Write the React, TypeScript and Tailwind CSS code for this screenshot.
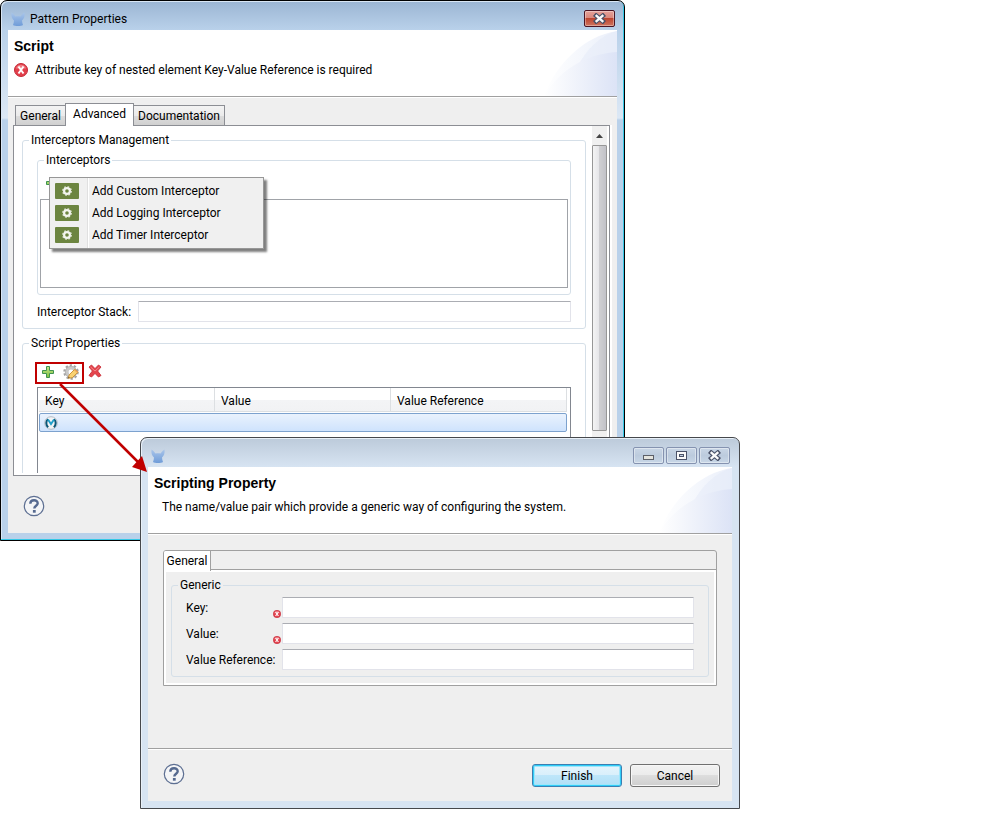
import type { ReactNode } from "react";

function AppIcon() {
  return (
    <svg className="size-4 shrink-0" viewBox="0 0 16 16" aria-hidden="true">
      <defs>
        <linearGradient id="appIcon" x1="0" y1="0" x2="0" y2="1">
          <stop offset="0" stopColor="#a9c5ea" />
          <stop offset="1" stopColor="#6f9cd8" />
        </linearGradient>
      </defs>
      <path
        d="M1.500 1.500C3 2.500 4.500 4 5.500 5.500C7 5 9 5 10.500 5.500C11.500 4 13 2.500 14.500 1.500C15 5 14 8 12 9.500C12 11 12.500 12.500 13 14C11 15.300 5 15.300 3 14C3.500 12.500 4 11 4 9.500C2 8 1 5 1.500 1.500Z"
        fill="url(#appIcon)"
      />
    </svg>
  );
}

function ErrorIcon({ className }: { className: string }) {
  return (
    <svg className={className} viewBox="0 0 14 14" aria-hidden="true">
      <circle cx="7" cy="7" r="6.500" fill="#e23f4b" stroke="#c42b38" />
      <path d="M2 5.500a5.200 5.200 0 0 1 10 0z" fill="#ef7b82" />
      <path d="M4.500 3.500 9.500 10.500M9.500 3.500 4.500 10.500" stroke="#fff" strokeWidth="2" />
    </svg>
  );
}

function PlusIcon() {
  return (
    <svg className="size-[14px]" viewBox="0 0 14 14" aria-hidden="true">
      <defs>
        <linearGradient id="plus" x1="0" y1="0" x2="0" y2="1">
          <stop offset="0" stopColor="#c5e58c" />
          <stop offset="1" stopColor="#7fc03f" />
        </linearGradient>
      </defs>
      <path
        d="M5.500 1.500h3v4h4v3h-4v4h-3v-4h-4v-3h4z"
        fill="url(#plus)"
        stroke="#3f9350"
      />
    </svg>
  );
}

function EditIcon() {
  return (
    <svg className="size-4" viewBox="0 0 16 16" aria-hidden="true">
      <circle cx="8" cy="8" r="6.500" fill="none" stroke="#a3a3a3" strokeWidth="2.500" strokeDasharray="2.200 1.880" />
      <circle cx="8" cy="8" r="4.200" fill="none" stroke="#c9c9c9" strokeWidth="3.500" />
      <circle cx="8" cy="8" r="5.700" fill="none" stroke="#a3a3a3" strokeWidth="0.600" />
      <path d="M5.200 14.200 6.200 10.800 11.800 5.200 15.200 8 9.200 13.800Z" fill="#f9d272" stroke="#c98c2e" strokeWidth="0.900" />
      <path d="M11 6 12 5.200 15.200 8 14.200 9Z" fill="#eda25a" />
      <path d="M5.200 14.200 5.700 12.700 6.800 13.700Z" fill="#5b4630" />
    </svg>
  );
}

function DeleteIcon() {
  return (
    <svg className="size-[14px]" viewBox="0 0 14 14" aria-hidden="true">
      <path
        d="M1 3 3.500 1 7 4.600 10.500 1 13 3 9.600 7 13 11.500 10.500 13 7 9.400 3.500 13 1 11.500 4.400 7Z"
        fill="#e5444c"
        stroke="#c9303a"
        strokeWidth="0.900"
        strokeLinejoin="round"
      />
      <path d="M2.600 3 7 7M11.400 3 7 7" stroke="#f28a8d" strokeWidth="1" />
    </svg>
  );
}

function MuleIcon() {
  return (
    <svg className="size-[14px]" viewBox="0 0 14 14" aria-hidden="true">
      <circle cx="7" cy="7" r="6.300" fill="#f2f4f6" stroke="#b4bcc6" />
      <path d="M4.200 11.200C1.600 9 1.800 4.800 4 3.200M9.800 11.200C12.400 9 12.200 4.800 10 3.200" fill="none" stroke="#0b5677" strokeWidth="2" />
      <path d="M4 3.500 7 8 10 3.500" fill="none" stroke="#1f9fc9" strokeWidth="1.900" />
    </svg>
  );
}

function InterceptorIcon() {
  return (
    <svg className="h-4 w-6 shrink-0" viewBox="0 0 24 16" aria-hidden="true">
      <rect width="24" height="16" rx="1" fill="#6c8540" />
      <circle cx="12" cy="8" r="4.300" fill="none" stroke="#d5dcc8" strokeWidth="1.400" strokeDasharray="1.700 1.677" />
      <circle cx="12" cy="8" r="2.900" fill="none" stroke="#f3f5ef" strokeWidth="2.200" />
    </svg>
  );
}

function HelpButton() {
  return (
    <button type="button" aria-label="Help" className="size-[22px]">
      <svg viewBox="0 0 22 22" className="size-full" aria-hidden="true">
        <circle cx="11" cy="11" r="9.700" fill="#f4f5f7" stroke="#5d6f92" strokeWidth="1.200" />
        <path d="M7.300 8.800C7.300 4.200 14.700 4.200 14.700 8.300C14.700 10.800 11.300 10.800 11.300 13.600" fill="none" stroke="#566a90" strokeWidth="2.400" />
        <rect x="9.900" y="15" width="2.800" height="2.700" fill="#566a90" />
      </svg>
    </button>
  );
}

function HeaderArt() {
  return (
    <svg className="h-full w-[75px] shrink-0" viewBox="0 0 75 66" preserveAspectRatio="none" aria-hidden="true">
      <defs>
        <linearGradient id="sweepA">
          <stop offset="0" stopColor="#fff" />
          <stop offset="0.400" stopColor="#f7f9fd" />
          <stop offset="1" stopColor="#eaeffa" />
        </linearGradient>
        <linearGradient id="sweepB">
          <stop offset="0" stopColor="#fff" />
          <stop offset="0.300" stopColor="#f5f7fc" />
          <stop offset="1" stopColor="#dce3f6" />
        </linearGradient>
      </defs>
      <path d="M2 66C14 34 42 6 75 1V66Z" fill="url(#sweepA)" />
      <path d="M35 38C45 18 58 6 75 1V23C60 25 46 30 35 38Z" fill="#e3e9f8" opacity="0.500" />
      <path d="M2 66C16 42 42 24 75 22V66Z" fill="url(#sweepB)" />
    </svg>
  );
}

function DialogHeader({ title, children }: { title: string; children: ReactNode }) {
  return (
    <header className="flex h-[67px] justify-between border-b border-[#a0a0a0] bg-white">
      <div className="flex flex-col gap-2 pt-2 pl-[6px]">
        <h1 className="font-['Liberation_Sans',Arial,sans-serif] text-sm leading-4 font-bold">{title}</h1>
        {children}
      </div>
      <HeaderArt />
    </header>
  );
}

function CrossGlyph() {
  return (
    <svg className="h-[11px] w-[13px] shrink-0" viewBox="0 0 13 11" aria-hidden="true">
      <path d="M1.500 1.200 11.500 9.800M11.500 1.200 1.500 9.800" stroke="#4b5268" strokeWidth="4.600" />
      <path d="M2.700 2.200 10.300 8.800M10.300 2.200 2.700 8.800" stroke="#fafafa" strokeWidth="2.400" />
    </svg>
  );
}

function Group({ label, className, children }: { label: string; className: string; children: ReactNode }) {
  return (
    <fieldset className="min-w-0 rounded-[3px] border border-[#d5dfe8]">
      <legend className="ml-[6px] px-[2px] leading-4">{label}</legend>
      <div className={className}>{children}</div>
    </fieldset>
  );
}

const textBox =
  "h-[21px] min-w-0 flex-1 rounded-[1px] border border-[#e2e3ea] border-t-[#abadb3] bg-white px-1 outline-none";

function PropertyRow({ id, label, invalid }: { id: string; label: string; invalid: boolean }) {
  return (
    <div className="flex items-center">
      <label htmlFor={id} className="w-[87px] whitespace-nowrap">
        {label}
      </label>
      <span className="flex h-[21px] w-[9px] items-end">
        {invalid && <ErrorIcon className="size-2 shrink-0" />}
      </span>
      <input id={id} type="text" className={textBox} />
    </div>
  );
}

const interceptors = ["Add Custom Interceptor", "Add Logging Interceptor", "Add Timer Interceptor"];

function InterceptorMenu() {
  return (
    <div
      role="menu"
      className="absolute top-[29px] left-3 z-10 w-[215px] border border-[#979797] bg-[linear-gradient(90deg,#f0f0f0_37px,#e0e0e0_37px,#e0e0e0_38px,#fff_38px,#fff_39px,#f0f0f0_39px)] p-[2px] shadow-[3px_3px_2px_rgba(0,0,0,0.5)]"
    >
      {interceptors.map((name) => (
        <button key={name} type="button" role="menuitem" className="flex h-[22px] w-full items-center gap-[13px] pl-[3px]">
          <InterceptorIcon />
          {name}
        </button>
      ))}
    </div>
  );
}

function ScrollBar() {
  return (
    <div className="flex w-[15px] shrink-0 flex-col items-center bg-[#f0f0f0]">
      <button type="button" aria-label="Scroll up" className="flex h-[19px] w-full items-center justify-center">
        <svg className="h-1 w-[7px]" viewBox="0 0 7 4" aria-hidden="true">
          <path d="M0 4 3.500 0 7 4Z" fill="#444" />
        </svg>
      </button>
      <div className="h-[286px] w-full rounded-[1px] border border-[#979797] bg-[linear-gradient(90deg,#f4f4f4,#e6e6e9_45%,#cfcfd2_50%,#c2c2c8)]" />
    </div>
  );
}

function PatternDialog() {
  return (
    <section className="w-[625px] rounded-t-[7px] border border-black bg-[linear-gradient(#9bb5d3,#b9d1ea_29px,#dce8f5_117px,#b9d1ea_119px)] px-[7px] pb-[7px] shadow-[inset_-1px_-1px_0_#35c8e6,inset_1px_1px_0_#d9e6f4]">
      <div className="flex h-[29px] items-center pt-[6px]">
        <span className="flex flex-1 items-center gap-1 pl-[2px]">
          <AppIcon />
          Pattern Properties
        </span>
        <button
          type="button"
          aria-label="Close"
          className="mr-[2px] flex h-[17px] w-[31px] items-center justify-center rounded-[2px] border border-[#4a1524] bg-[linear-gradient(#e5a199,#d9877c_47%,#bd4530_50%,#cf7560)] shadow-[inset_0_0_0_1px_rgba(255,255,255,0.35)]"
        >
          <CrossGlyph />
        </button>
      </div>
      <div className="bg-[#efefef]">
        <DialogHeader title="Script">
          <p className="flex items-center gap-[7px] whitespace-nowrap">
            <ErrorIcon className="size-[14px]" />
            Attribute key of nested element Key-Value Reference is required
          </p>
        </DialogHeader>
        <div className="border-t border-white px-[5px] pt-[5px]">
          <div role="tablist" className="flex items-end pl-[2px]">
            <button type="button" role="tab" className="h-5 w-[50px] border border-r-0 border-b-0 border-[#8c8e94] bg-[linear-gradient(#f3f3f3,#ebebeb_50%,#dddddd_50%,#d0d0d0)]">
              General
            </button>
            <button type="button" role="tab" aria-selected="true" className="relative z-10 -mb-px h-[23px] w-[69px] border border-b-0 border-[#8c8e94] bg-white pb-[2px]">
              Advanced
            </button>
            <button type="button" role="tab" className="h-5 w-[91px] border border-b-0 border-l-0 border-[#8c8e94] bg-[linear-gradient(#f3f3f3,#ebebeb_50%,#dddddd_50%,#d0d0d0)]">
              Documentation
            </button>
          </div>
          <div className="mr-[2px] flex h-[351px] overflow-hidden border border-[#8c8e94] bg-white pr-[2px] pb-[2px] shadow-[2px_0_0_#fff]">
            <div className="flex-1 overflow-hidden pt-[6px] pr-[6px] pl-2">
              <Group label="Interceptors Management" className="px-[14px] pb-[6px]">
                <div className="relative pt-1">
                  <Group label="Interceptors" className="px-[2px] pb-[6px]">
                    <div className="flex h-[31px] items-start gap-2 pt-2 pl-[5px]">
                      <PlusIcon />
                    </div>
                    <div role="listbox" aria-label="Interceptors" className="h-[89px] border border-[#a0a3a8]" />
                  </Group>
                  <InterceptorMenu />
                </div>
                <div className="mt-[6px] flex items-center">
                  <label htmlFor="stack" className="w-[101px] whitespace-nowrap">
                    Interceptor Stack:
                  </label>
                  <input id="stack" type="text" className={textBox} />
                </div>
              </Group>
              <div className="h-[6px]" />
              <Group label="Script Properties" className="px-[14px] pb-4">
                <div className="-ml-[2px] flex h-[36px] items-center gap-1 pt-[7px] pb-[7px]">
                  <div className="mt-[8px] flex h-[22px] w-[49px] shrink-0 items-center justify-center gap-2 border-2 border-[#c00000] pb-[2px]">
                    <button type="button" aria-label="Add property"><PlusIcon /></button>
                    <button type="button" aria-label="Edit property"><EditIcon /></button>
                  </div>
                  <button type="button" aria-label="Delete property" className="mt-1"><DeleteIcon /></button>
                </div>
                <div className="h-[130px] border border-[#828790] pr-[3px] pl-px">
                  <table className="w-full table-fixed border-separate border-spacing-0 text-left">
                    <thead>
                      <tr className="h-6 bg-[linear-gradient(#fff_50%,#f3f4f6_50%,#f1f2f4)]">
                        {["Key", "Value", "Value Reference"].map((name) => (
                          <th key={name} scope="col" className="border-r border-b border-[#dcdfe2] pt-[2px] pl-[6px] font-normal">
                            {name}
                          </th>
                        ))}
                      </tr>
                    </thead>
                    <tbody>
                      <tr>
                        <td colSpan={3} className="pt-px">
                          <div className="flex h-[19px] items-center rounded-[2px] border border-[#7da2ce] bg-[linear-gradient(#e9f2fd,#cfe3fd)] pl-1">
                            <MuleIcon />
                          </div>
                        </td>
                      </tr>
                    </tbody>
                  </table>
                </div>
              </Group>
            </div>
            <ScrollBar />
          </div>
        </div>
        <footer className="flex h-[57px] items-center pb-px pl-[15px] pt-1">
          <HelpButton />
        </footer>
      </div>
    </section>
  );
}

const captionButton =
  "flex h-[17px] w-[31px] items-center justify-center rounded-[2px] border border-[#8593b0] bg-[linear-gradient(#c9d6e6,#bccbdd_50%,#c8d7e7)] shadow-[inset_0_0_0_1px_rgba(255,255,255,0.4)]";

function ScriptingDialog() {
  return (
    <section className="absolute top-[437px] left-[140px] z-20 w-[600px] rounded-t-[7px] border border-[#46484c] bg-[linear-gradient(#bccada,#d7e4f2_29px)] px-[7px] pb-[7px] shadow-[inset_1px_1px_0_#e8f0f8]">
      <div className="flex h-[29px] items-center pt-[6px]">
        <span className="flex-1 pl-[2px]">
          <AppIcon />
        </span>
        <span className="mr-[2px] flex gap-[2px]">
          <button type="button" aria-label="Minimize" className={captionButton}>
            <svg className="mt-[3px] h-[5px] w-[11px]" viewBox="0 0 11 5" aria-hidden="true">
              <rect x="0.500" y="0.500" width="10" height="4" fill="#e4e4de" stroke="#5c5f68" />
            </svg>
          </button>
          <button type="button" aria-label="Maximize" className={captionButton}>
            <svg className="h-[9px] w-[11px]" viewBox="0 0 11 9" aria-hidden="true">
              <rect x="0.500" y="0.500" width="10" height="8" fill="#fafafa" stroke="#4b5268" />
              <rect x="3.500" y="3.500" width="4" height="2" fill="#c3d0e0" stroke="#4b5268" />
            </svg>
          </button>
          <button type="button" aria-label="Close" className={captionButton}>
            <CrossGlyph />
          </button>
        </span>
      </div>
      <div className="bg-[#efefef]">
        <DialogHeader title="Scripting Property">
          <p className="pl-2 whitespace-nowrap">
            The name/value pair which provide a generic way of configuring the system.
          </p>
        </DialogHeader>
        <div className="h-[214px] border-t border-white px-[15px] pt-[15px]">
          <div className="rounded-t-[3px] border border-[#a0a0a0]">
            <div role="tablist" className="flex h-[19px] border-b border-[#a0a0a0]">
              <button type="button" role="tab" aria-selected="true" className="h-5 w-[47px] rounded-tl-[2px] border-r border-[#a0a0a0] bg-white">
                General
              </button>
            </div>
            <div className="border-2 border-white px-[5px] pt-[5px] pb-[6px]">
              <Group label="Generic" className="pr-[14px] pb-[6px] pl-[14px]">
                <div className="flex flex-col gap-[5px] pt-1">
                  <PropertyRow id="key" label="Key:" invalid />
                  <PropertyRow id="value" label="Value:" invalid />
                  <PropertyRow id="valueRef" label="Value Reference:" invalid={false} />
                </div>
              </Group>
            </div>
          </div>
        </div>
        <footer className="flex h-[53px] items-center gap-2 border-t border-[#a0a0a0] pr-3 pl-[15px] shadow-[inset_0_1px_0_#fff]">
          <span className="flex flex-1 pb-[2px]">
            <HelpButton />
          </span>
          <button type="button" className="h-[23px] w-[90px] rounded-[3px] border border-[#3c7fb1] bg-[linear-gradient(#e6f4fc,#d8effb_50%,#beE6fa_50%,#b0dff6)] pt-px shadow-[inset_0_0_0_1px_#2fcdf8,inset_0_0_0_2px_#9fe6fb]">
            Finish
          </button>
          <button type="button" className="h-[23px] w-[90px] rounded-[3px] border border-[#707070] bg-[linear-gradient(#f2f2f2,#ebebeb_50%,#dddddd_50%,#cfcfcf)] pt-px shadow-[inset_0_0_0_1px_#f7f7f7]">
            Cancel
          </button>
        </footer>
      </div>
    </section>
  );
}

function CalloutArrow() {
  return (
    <svg className="pointer-events-none absolute top-[383px] left-[58px] z-30 h-[90px] w-[90px]" viewBox="0 0 90 90" aria-hidden="true">
      <path d="M2 1 81 80" stroke="#c00000" strokeWidth="2.500" />
      <path d="M89 89 74 84 84 73Z" fill="#c00000" />
    </svg>
  );
}

export default function App() {
  return (
    <main className="relative min-h-screen bg-white font-[Roboto,'Open_Sans',sans-serif] text-xs leading-4 text-black">
      <PatternDialog />
      <ScriptingDialog />
      <CalloutArrow />
    </main>
  );
}
